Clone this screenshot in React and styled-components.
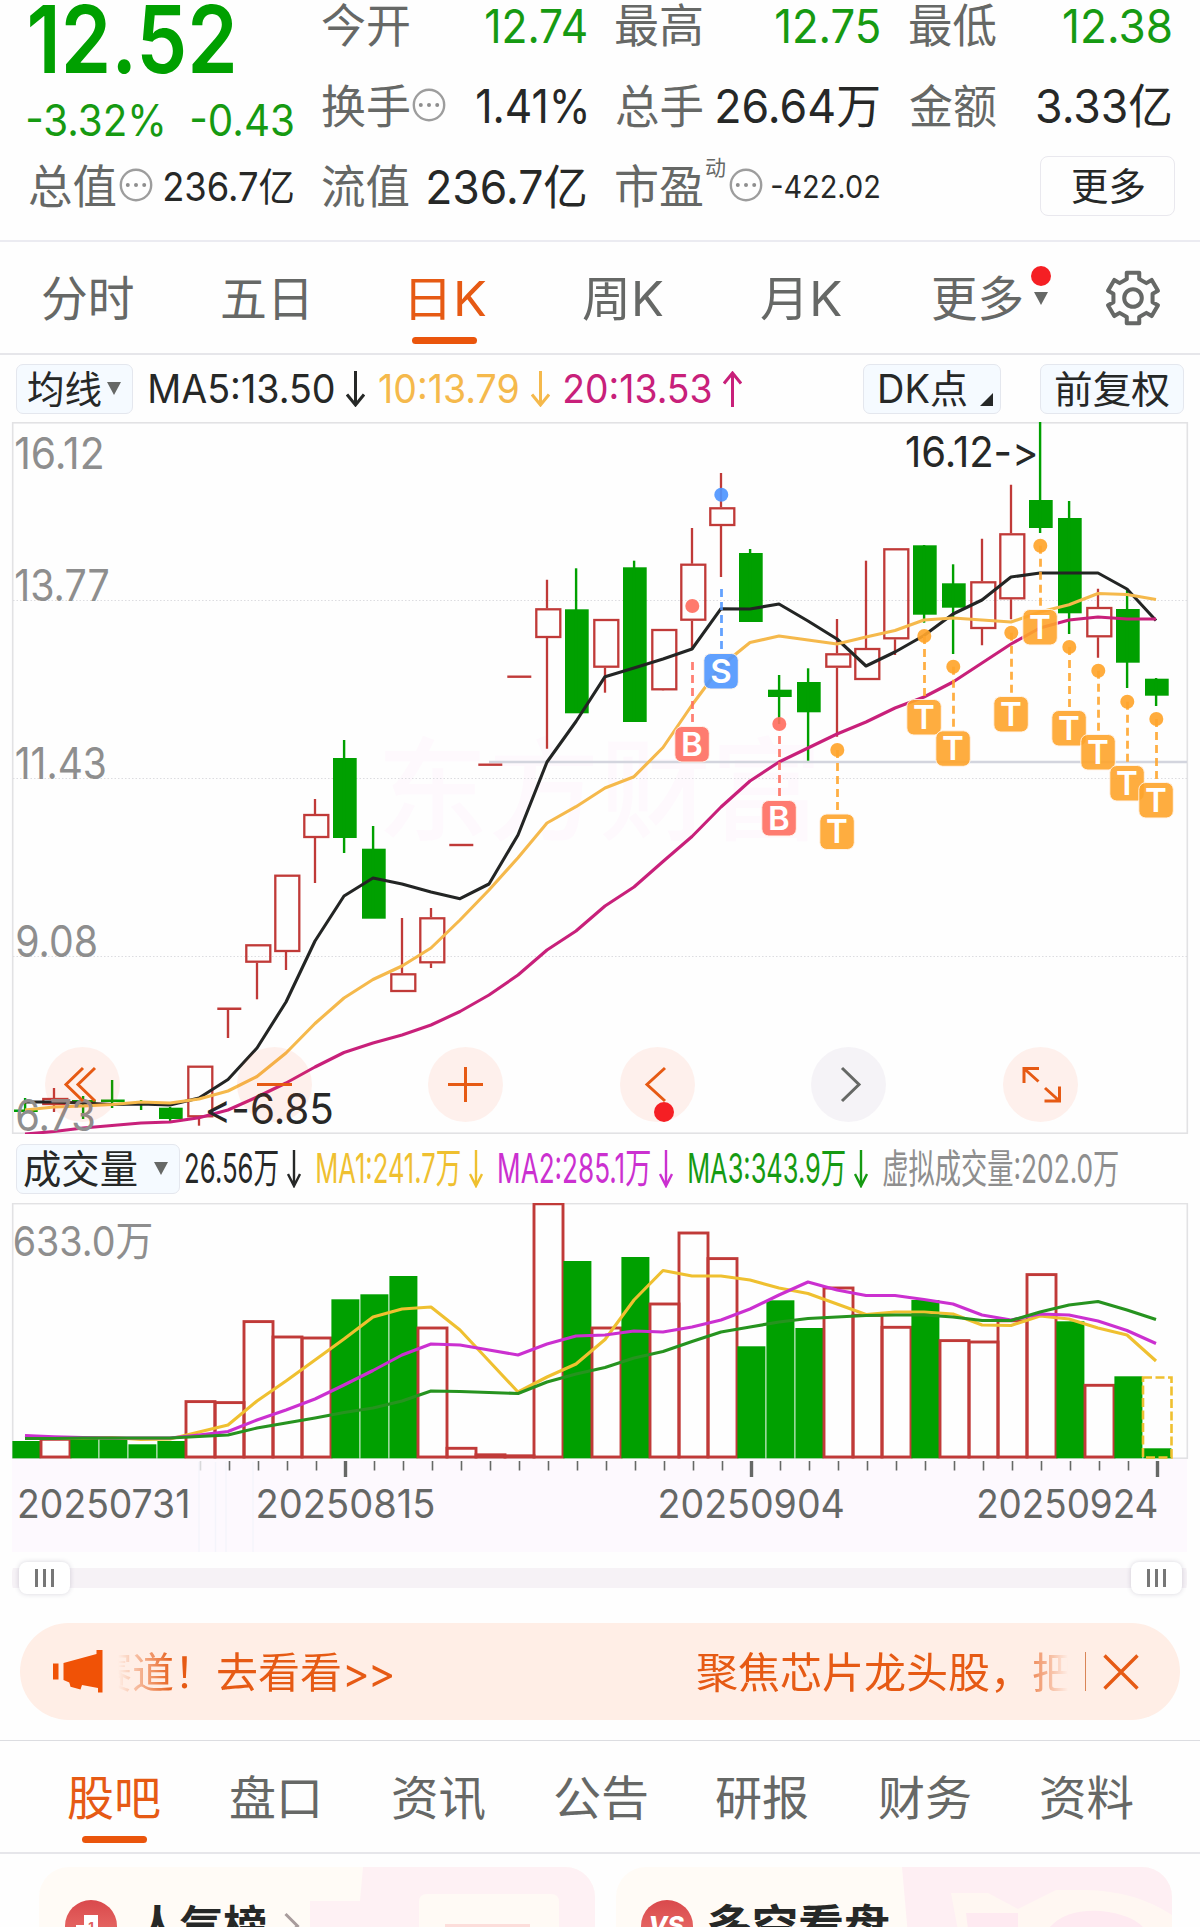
import React, { Fragment } from "react";
import styled, { createGlobalStyle, css } from "styled-components";

const FONT = 'Inter, "Noto Sans CJK SC", sans-serif';

const ORANGE = "#e65a14";
const GREEN = "#00a000";
const TEXT_GREEN = "#169a12";
const RED = "#c03a38";
const DARK = "#262827";
const GREY = "#666866";
const LIGHT_GREY = "#8e8e8e";
const AMBER = "#f5b94c";
const MAGENTA = "#c8207a";
const YELLOW = "#efc030";
const PURPLE = "#cb30d0";

const GlobalStyle = createGlobalStyle`
  * {
    box-sizing: border-box;
  }
  body {
    margin: 0;
    background: #fefefe;
    font-family: ${FONT};
  }
  button {
    font: inherit;
    padding: 0;
    border: none;
    background: none;
  }
`;

/* ---------- text fitted to a width ---------- */

const ctx = document.createElement("canvas").getContext("2d");

function inkBox(text, size, weight) {
  ctx.font = `${weight} ${size}px ${FONT}`;
  const m = ctx.measureText(text);
  return {
    left: -m.actualBoundingBoxLeft,
    width: m.actualBoundingBoxLeft + m.actualBoundingBoxRight,
  };
}

const FitBox = styled.span`
  display: block;
  flex: none;
  width: ${(p) => p.$w}px;
  height: ${(p) => p.$size}px;
  line-height: ${(p) => p.$size}px;
  margin-left: ${(p) => p.$ml || 0}px;
  font-size: ${(p) => p.$size}px;
  font-weight: ${(p) => p.$weight};
  color: ${(p) => p.$color};
  white-space: nowrap;
`;

const FitInner = styled.span`
  display: inline-block;
  transform-origin: 0 50%;
`;

function Fit({ children, w, size, color = GREY, weight = 400, ml }) {
  const ink = inkBox(children, size, weight);
  const s = w / ink.width;
  return (
    <FitBox $w={w} $size={size} $color={color} $weight={weight} $ml={ml}>
      <FitInner
        style={{ transform: `translateX(${-ink.left * s}px) scaleX(${s})` }}
      >
        {children}
      </FitInner>
    </FitBox>
  );
}

function ChartText({ children, x, y, w, size, color, weight = 400 }) {
  const ink = inkBox(children, size, weight);
  const s = w / ink.width;
  return (
    <text
      transform={`translate(${x - ink.left * s} ${y}) scale(${s} 1)`}
      fontSize={size}
      fontWeight={weight}
      fill={color}
      style={{ fontFeatureSettings: '"calt" 0' }}
    >
      {children}
    </text>
  );
}

/* ---------- page ---------- */

const Page = styled.div`
  width: 1200px;
  height: 1927px;
  overflow: hidden;
  display: flex;
  flex-direction: column;
`;

/* ---------- quote ---------- */

const Quote = styled.section`
  height: 240px;
  flex: none;
  display: grid;
  grid-template-columns: 264px 264px 264px 263px;
  column-gap: 29px;
  padding-left: 29px;
`;

const QuoteColumn = styled.div`
  display: grid;
  grid-template-rows: ${(p) => (p.$lead ? "77px 86px 46px" : "50px 50px 50px")};
  row-gap: ${(p) => (p.$lead ? 0 : 30.5)}px;
`;

const QuoteCell = styled.div`
  display: flex;
  align-items: center;
  justify-content: space-between;
`;

const Label = styled.div`
  display: flex;
  align-items: center;
`;

const Info = styled.svg`
  display: block;
  width: 34px;
  height: 34px;
  margin: -2px 0 0 ${(p) => p.$ml}px;
`;

const Super = styled.div`
  align-self: flex-start;
  margin: -6px 0 0 4px;
`;

const MoreButton = styled.button`
  width: 135px;
  height: 60px;
  margin-left: auto;
  margin-right: -4px;
  display: flex;
  flex: none;
  align-items: center;
  justify-content: center;
  border: 1.5px solid #e9e8ee;
  border-radius: 8px;
`;

function InfoIcon({ ml = 3 }) {
  return (
    <Info $ml={ml} viewBox="0 0 34 34">
      <circle cx="17" cy="17" r="15.2" fill="none" stroke="#9d9d9d" strokeWidth="2.4" />
      <circle cx="8.8" cy="17" r="2" fill="#8e8e8e" />
      <circle cx="17" cy="17" r="2" fill="#8e8e8e" />
      <circle cx="25.2" cy="17" r="2" fill="#8e8e8e" />
    </Info>
  );
}

function QuotePanel() {
  return (
    <Quote>
      <QuoteColumn $lead>
        <QuoteCell>
          <Fit w={203} size={94} weight={600} color={GREEN} ml={1}>12.52</Fit>
        </QuoteCell>
        <QuoteCell>
          <Fit w={135} size={44} color={TEXT_GREEN} ml={-1}>-3.32%</Fit>
          <Fit w={101} size={44} color={TEXT_GREEN}>-0.43</Fit>
        </QuoteCell>
        <QuoteCell>
          <Label>
            <Fit w={87} size={46}>总值</Fit>
            <InfoIcon />
          </Label>
          <Fit w={129} size={39} color={DARK}>236.7亿</Fit>
        </QuoteCell>
      </QuoteColumn>
      <QuoteColumn>
        <QuoteCell>
          <Fit w={87} size={46}>今开</Fit>
          <Fit w={100} size={47} color={TEXT_GREEN}>12.74</Fit>
        </QuoteCell>
        <QuoteCell>
          <Label>
            <Fit w={87} size={46}>换手</Fit>
            <InfoIcon />
          </Label>
          <Fit w={109} size={47} color={DARK}>1.41%</Fit>
        </QuoteCell>
        <QuoteCell>
          <Fit w={87} size={46}>流值</Fit>
          <Fit w={158} size={47} color={DARK}>236.7亿</Fit>
        </QuoteCell>
      </QuoteColumn>
      <QuoteColumn>
        <QuoteCell>
          <Fit w={86} size={46} ml={1}>最高</Fit>
          <Fit w={103} size={47} color={TEXT_GREEN}>12.75</Fit>
        </QuoteCell>
        <QuoteCell>
          <Fit w={86} size={46} ml={1}>总手</Fit>
          <Fit w={162} size={47} color={DARK}>26.64万</Fit>
        </QuoteCell>
        <QuoteCell>
          <Label>
            <Fit w={86} size={46} ml={1}>市盈</Fit>
            <Super>
              <Fit w={19} size={21}>动</Fit>
            </Super>
            <InfoIcon ml={4} />
          </Label>
          <Fit w={107} size={31} color={DARK}>-422.02</Fit>
        </QuoteCell>
      </QuoteColumn>
      <QuoteColumn>
        <QuoteCell>
          <Fit w={86} size={46} ml={2}>最低</Fit>
          <Fit w={107} size={47} color={TEXT_GREEN}>12.38</Fit>
        </QuoteCell>
        <QuoteCell>
          <Fit w={86} size={46} ml={2}>金额</Fit>
          <Fit w={134} size={47} color={DARK}>3.33亿</Fit>
        </QuoteCell>
        <QuoteCell>
          <MoreButton>
            <Fit w={72} size={38} color={DARK}>更多</Fit>
          </MoreButton>
        </QuoteCell>
      </QuoteColumn>
    </Quote>
  );
}

/* ---------- tabs ---------- */

const TabBar = styled.nav`
  height: ${(p) => p.$h}px;
  flex: none;
  display: flex;
  align-items: center;
  padding-top: 2px;
  border-top: ${(p) => p.$top || 2}px solid ${(p) => p.$line || "#ebebf1"};
  border-bottom: 2px solid #e6e6ea;
`;

const Tab = styled.button`
  position: relative;
  display: flex;
  align-items: center;
  margin-left: ${(p) => p.$ml}px;
  ${(p) =>
    p.$active &&
    css`
      &::after {
        content: "";
        position: absolute;
        left: 50%;
        bottom: ${p.$drop}px;
        width: 65px;
        height: 7px;
        margin-left: ${p.$shift || -32.5}px;
        border-radius: 4px;
        background: #ea550c;
      }
    `}
`;

const Caret = styled.span`
  width: 0;
  height: 0;
  margin: ${(p) => p.$m || "0"};
  border: solid transparent;
  border-width: 13px 7.7px 0;
  border-top-color: ${GREY};
`;

const TabDot = styled.span`
  position: absolute;
  right: -3px;
  top: -9px;
  width: 20px;
  height: 20px;
  border-radius: 50%;
  background: #f51f24;
`;

const Gear = styled.svg`
  width: 60px;
  height: 60px;
  margin: -1px 0 0 55px;
`;

const rad = (deg) => (deg * Math.PI) / 180;

const gearPoints = [0, 60, 120, 180, 240, 300]
  .flatMap((a) => [
    [a - 18, 20],
    [a - 14, 26],
    [a + 14, 26],
    [a + 18, 20],
  ])
  .map(([a, r]) => `${30 + r * Math.sin(rad(a))},${30 - r * Math.cos(rad(a))}`)
  .join(" ");

const PERIODS = [
  { label: "分时", w: 90.5, ml: 43 },
  { label: "五日", w: 84, ml: 88 },
  { label: "日K", w: 74.5, ml: 105 },
  { label: "周K", w: 79.5, ml: 98 },
  { label: "月K", w: 80, ml: 98 },
];

function PeriodTabs() {
  return (
    <TabBar $h={115}>
      {PERIODS.map((t) => {
        const active = t.label === "日K";
        return (
          <Tab key={t.label} $ml={t.ml} $active={active} $drop={-21} $shift={-36}>
            <Fit w={t.w} size={48} color={active ? ORANGE : GREY}>
              {t.label}
            </Fit>
          </Tab>
        );
      })}
      <Tab $ml={92.5}>
        <Fit w={89} size={48}>更多</Fit>
        <Caret $m="0 0 0 12px" />
        <TabDot />
      </Tab>
      <Gear viewBox="0 0 60 60" fill="none" stroke={GREY} strokeWidth="4">
        <polygon points={gearPoints} strokeLinejoin="round" />
        <circle cx="30" cy="30" r="8.8" />
      </Gear>
    </TabBar>
  );
}

/* ---------- indicator rows ---------- */

const IndicatorRow = styled.div`
  height: ${(p) => p.$h}px;
  flex: none;
  display: flex;
  align-items: center;
  padding-left: 16px;
`;

const Pill = styled.button`
  position: relative;
  display: flex;
  flex: none;
  align-items: center;
  width: ${(p) => p.$w}px;
  height: 50px;
  margin-left: ${(p) => p.$ml || 0}px;
  padding-left: ${(p) => p.$pad}px;
  background: #f5faff;
  border: 1.5px solid #e4e7ee;
  border-radius: 7px;
`;

const Corner = styled.span`
  width: 0;
  height: 0;
  margin: 22px 0 0 13px;
  border: solid transparent;
  border-width: 0 0 13px 13px;
  border-bottom-color: ${DARK};
`;

const ArrowSvg = styled.svg`
  flex: none;
  width: ${(p) => p.$w}px;
  height: ${(p) => p.$h}px;
  margin-left: ${(p) => p.$ml}px;
`;

function Arrow({ up, color, w = 19, h = 36, ml }) {
  const reach = w < 16 ? 12 : w / 2 + 1;
  const d = up
    ? `M${w / 2} ${h}V2M1 ${2 + reach}L${w / 2} 2L${w - 1} ${2 + reach}`
    : `M${w / 2} 0V${h - 2}M1 ${h - 2 - reach}L${w / 2} ${h - 2}L${w - 1} ${h - 2 - reach}`;
  return (
    <ArrowSvg $w={w} $h={h} $ml={ml} viewBox={`0 0 ${w} ${h}`}>
      <path d={d} fill="none" stroke={color} strokeWidth={w < 16 ? 2.4 : 3} />
    </ArrowSvg>
  );
}

function PriceIndicators() {
  return (
    <IndicatorRow $h={67}>
      <Pill $w={117} $pad={11}>
        <Fit w={73} size={38} color={DARK}>均线</Fit>
        <Caret $m="0 0 0 6px" />
      </Pill>
      <Fit w={183.5} size={40} color={DARK} ml={16.5}>MA5:13.50</Fit>
      <Arrow color={DARK} ml={13} />
      <Fit w={139} size={40} color={AMBER} ml={14}>10:13.79</Fit>
      <Arrow color={AMBER} ml={13} />
      <Fit w={146} size={40} color={MAGENTA} ml={15}>20:13.53</Fit>
      <Arrow up color={MAGENTA} ml={12} />
      <Pill $w={138} $pad={16} $ml={121}>
        <Fit w={87} size={39} color={DARK}>DK点</Fit>
        <Corner />
      </Pill>
      <Pill $w={144} $pad={14.5} $ml={39}>
        <Fit w={113} size={38} color={DARK}>前复权</Fit>
      </Pill>
    </IndicatorRow>
  );
}

function VolumeIndicators() {
  return (
    <IndicatorRow $h={69}>
      <Pill $w={164} $pad={7}>
        <Fit w={113} size={39} color={DARK}>成交量</Fit>
        <Caret $m="0 0 0 17px" />
      </Pill>
      <Fit w={92} size={41} color={DARK} ml={5.5}>26.56万</Fit>
      <Arrow color={DARK} w={14} h={38} ml={9} />
      <Fit w={143} size={41} color={YELLOW} ml={16}>MA1:241.7万</Fit>
      <Arrow color={YELLOW} w={14} h={38} ml={9} />
      <Fit w={151} size={41} color={PURPLE} ml={16}>MA2:285.1万</Fit>
      <Arrow color={PURPLE} w={14} h={38} ml={9} />
      <Fit w={156} size={41} color={TEXT_GREEN} ml={16}>MA3:343.9万</Fit>
      <Arrow color={TEXT_GREEN} w={14} h={38} ml={9} />
      <Fit w={235} size={40} color={LIGHT_GREY} ml={15}>虚拟成交量:202.0万</Fit>
    </IndicatorRow>
  );
}

/* ---------- candle chart ---------- */

const STEP = 29;
const cx = (i) => 25.3 + STEP * i;

// [up, top, bottom, high, low]
const CANDLES = [
  [0, 1109.5, 1112, 1098, 1112],
  [1, 1098, 1105, 1088, 1112],
  [0, 1100, 1103, 1096, 1119],
  [0, 1099.5, 1102, 1080, 1108],
  [0, 1102, 1104, 1100, 1110],
  [0, 1107.7, 1119, 1107, 1121],
  [1, 1065.7, 1117.3, 1065.7, 1125.7],
  [1, 1008.7, 1008.7, 1008, 1038],
  [1, 944.3, 962.7, 944.3, 999.3],
  [1, 874.7, 952, 874.7, 970],
  [1, 814, 838, 799, 883],
  [0, 758, 838, 740, 853],
  [0, 848.7, 918.7, 826, 918],
  [1, 973.3, 992, 918, 992],
  [1, 917.3, 963.3, 908, 968],
  [1, 845, 845, 845, 845],
  [1, 764.7, 764.7, 764.7, 764.7],
  [1, 676.7, 676.7, 676.7, 676.7],
  [1, 608.3, 638, 579.7, 748.7],
  [0, 609.3, 713.3, 568.3, 713],
  [1, 619, 667.7, 619, 692.7],
  [0, 567.3, 722, 560.7, 722],
  [1, 629, 690.3, 629, 690],
  [1, 563.7, 620.7, 528, 650],
  [1, 507.3, 526, 473, 577],
  [0, 553, 622, 549, 622],
  [0, 689.7, 697, 675, 724],
  [0, 682, 712.3, 668.3, 760.7],
  [1, 653.3, 667.7, 619, 736.7],
  [1, 648, 680, 560.7, 680],
  [1, 548.3, 639.3, 548.3, 655],
  [0, 545.3, 614.7, 545, 622.7],
  [0, 583.3, 607.7, 564.3, 654],
  [1, 581.3, 629, 538.7, 645.3],
  [1, 533.3, 599.3, 484.7, 619.3],
  [0, 500, 528, 422, 533],
  [0, 518, 613.3, 501, 634],
  [1, 607, 637.3, 588.7, 657.7],
  [0, 609, 662.7, 589, 688],
  [0, 678.7, 695.7, 678, 706],
];

const MA5 = [
  1102, 1102, 1103, 1104.5, 1104, 1105, 1098, 1079.5, 1048, 1002, 941, 896,
  878, 884, 892, 898.7, 884, 835, 762, 721.5, 676.7, 668, 659, 649, 608.7, 609,
  604, 621, 639, 666, 652, 635.5, 614, 600, 577, 573, 573, 573, 589, 620.5,
];

const MA10 = [
  1110, 1107, 1106, 1104.5, 1102, 1103, 1099, 1091, 1076.5, 1053, 1023.5, 998,
  979.5, 966, 948, 920, 890, 857.7, 823, 806.7, 788, 776.7, 747.5, 705, 666,
  642.5, 636, 640, 644, 637, 630.5, 620, 618, 620, 622, 612, 604.7, 593.5,
  594.5, 599.5,
];

const MA20 = [
  1134, 1131.5, 1128, 1125.5, 1123, 1122, 1117.7, 1110, 1097, 1083, 1067,
  1052.5, 1043, 1035, 1025, 1011.5, 995, 975, 950, 931, 906, 887, 861.5, 836.5,
  807, 781, 762, 748, 734, 722, 708, 697, 682, 663, 644, 628, 620, 617, 619,
  619,
];

const MARK_COLORS = { B: "#ff6f61", S: "#4f96ff", T: "#ffa52c" };

// index of the candle, letter, y of the dot, start of the dashes, top of the badge
const MARKS = [
  [23, "B", 606, 662, 726],
  [24, "S", 494.7, 589, 653],
  [26, "B", 724, 736, 800],
  [28, "T", 750, 750, 813.5],
  [31, "T", 636, 636, 699],
  [32, "T", 666.7, 666.7, 730.3],
  [34, "T", 632.7, 632.7, 696],
  [35, "T", 545.7, 545.7, 609],
  [36, "T", 647, 647, 710],
  [37, "T", 670.7, 670.7, 734],
  [38, "T", 701.7, 701.7, 765],
  [39, "T", 719, 719, 782],
];

const points = (ys) => ys.map((y, i) => `${cx(i) - 0.3},${y}`).join(" ");

function MaLine({ data, color }) {
  return (
    <polyline
      points={points(data)}
      fill="none"
      stroke={color}
      strokeWidth="3.1"
      strokeLinejoin="round"
    />
  );
}

function Candle({ i, data }) {
  const [up, top, bottom, high, low] = data;
  const x = cx(i);
  if (up && top === bottom) {
    return (
      <path
        d={`M${x - 11} ${top}h24M${x - 0.3} ${top}V${low}`}
        stroke={RED}
        strokeWidth="2.4"
      />
    );
  }
  if (up) {
    return (
      <g stroke={RED} strokeWidth="2.3" fill="none">
        <path d={`M${x - 0.3} ${high}V${top}M${x - 0.3} ${bottom}V${low}`} />
        <rect x={x - 11} y={top + 1} width="24" height={bottom - top - 2} />
      </g>
    );
  }
  return (
    <g fill={GREEN}>
      <rect x={x - 11.3} y={top} width="23.7" height={bottom - top} />
      <rect x={x - 1.4} y={high} width="2.4" height={low - high} />
    </g>
  );
}

function Mark({ data }) {
  const [i, letter, dot, from, top] = data;
  const color = MARK_COLORS[letter];
  const x = cx(i);
  return (
    <g>
      <circle cx={x} cy={dot} r="7" fill={color} opacity="0.92" />
      <path
        d={`M${x + 0.2} ${from}V${top - 1}`}
        stroke={color}
        strokeWidth="2.8"
        strokeDasharray="8 5"
        opacity="0.88"
      />
      <rect
        x={x - 17.5}
        y={top + 0.5}
        width="34.5"
        height="35.5"
        rx="7"
        fill={color}
        stroke="#fff3e8"
        strokeWidth="1"
        opacity="0.9"
      />
      <text
        x={x - 0.4}
        y={top + 29.8}
        fill="#fff"
        fontSize="33"
        fontWeight="600"
        textAnchor="middle"
      >
        {letter}
      </text>
    </g>
  );
}

const ChartArea = styled.div`
  position: relative;
  height: 712px;
  flex: none;
`;

const ChartSvg = styled.svg`
  display: block;
  flex: none;
  width: 1200px;
  height: ${(p) => p.$h}px;
`;

const Controls = styled.div`
  position: absolute;
  left: 45px;
  bottom: 12.5px;
  display: flex;
  gap: 116.5px;
`;

const RoundButton = styled.button`
  position: relative;
  width: 75px;
  height: 75px;
  border-radius: 50%;
  color: ${(p) => (p.$muted ? GREY : ORANGE)};
  background: ${(p) =>
    p.$muted ? "rgba(90, 60, 120, 0.055)" : "rgba(255, 80, 30, 0.08)"};

  svg {
    display: block;
    fill: none;
    stroke: currentColor;
    stroke-width: 3;
  }
`;

const ButtonDot = styled.span`
  position: absolute;
  left: 34.5px;
  bottom: 0;
  width: 20px;
  height: 20px;
  border-radius: 50%;
  background: #f51f24;
`;

const CONTROLS = [
  { id: "first", d: "M38 21L21 37.5L38 54M50 21L33 37.5L50 54" },
  { id: "minus", d: "M20 37.5H55" },
  { id: "plus", d: "M20 37.5H55M37.5 20V55" },
  { id: "prev", d: "M45 21L27 37.5L45 54", dot: true },
  { id: "next", d: "M31 21L48 37.5L31 54", muted: true },
  {
    id: "full",
    d: "M36 21.5H21V36M21 21.5L35.5 34.5M41.5 54H56.5V39.5M56.5 54L42 41",
  },
];

function PriceChart() {
  return (
    <ChartArea>
      <ChartSvg $h={712} viewBox="0 422 1200 712">
        <rect x="12.7" y="422.8" width="1174.6" height="710.4" fill="none" stroke="#e2e2e4" strokeWidth="1.6" />
        <ChartText x={384} y={832} w={430} size={112} weight={500} color="#fef9fd">
          东方财富
        </ChartText>
        {[600.5, 778.5, 956.5].map((y) => (
          <path key={y} d={`M13 ${y}H1187`} stroke="#dcdce0" strokeWidth="1" strokeDasharray="1.5 2" />
        ))}
        <path d="M489 762H1187" stroke="#d3d5de" strokeWidth="2.6" />
        {CANDLES.map((c, i) => (
          <Candle key={i} i={i} data={c} />
        ))}
        <MaLine data={MA5} color="#232524" />
        <MaLine data={MA10} color={AMBER} />
        <MaLine data={MA20} color={MAGENTA} />
        {MARKS.map((m) => (
          <Mark key={m[0]} data={m} />
        ))}
        <ChartText x={16} y={469} w={86} size={44} color={LIGHT_GREY}>16.12</ChartText>
        <ChartText x={16} y={601} w={92} size={44} color={LIGHT_GREY}>13.77</ChartText>
        <ChartText x={16.5} y={779} w={88.5} size={44} color={LIGHT_GREY}>11.43</ChartText>
        <ChartText x={17} y={957} w={79} size={44} color={LIGHT_GREY}>9.08</ChartText>
        <ChartText x={17} y={1131} w={77} size={44} color={LIGHT_GREY}>6.73</ChartText>
        <ChartText x={906} y={466.5} w={122} size={42} color={DARK}>{"16.12->"}</ChartText>
        <ChartText x={207.5} y={1124} w={125} size={42} color={DARK}>{"<-6.85"}</ChartText>
      </ChartSvg>
      <Controls>
        {CONTROLS.map((c) => (
          <RoundButton key={c.id} $muted={c.muted}>
            <svg width="75" height="75" viewBox="0 0 75 75">
              <path d={c.d} />
            </svg>
            {c.dot && <ButtonDot />}
          </RoundButton>
        ))}
      </Controls>
    </ChartArea>
  );
}

/* ---------- volume chart ---------- */

// [up, top]
const VOLUMES = [
  [0, 1441], [1, 1438], [0, 1439], [0, 1439.3], [0, 1444.3], [0, 1441],
  [1, 1400.3], [1, 1401.3], [1, 1320.3], [1, 1335.7], [1, 1336.7],
  [0, 1299.3], [0, 1294.3], [0, 1276], [1, 1326.7], [1, 1447], [1, 1453.5],
  [1, 1454.5], [1, 1202.5], [0, 1261], [1, 1326.7], [0, 1257], [1, 1302.7],
  [1, 1231.7], [1, 1257.3], [0, 1346.3], [0, 1300.3], [0, 1328],
  [1, 1286.7], [1, 1314], [1, 1326], [0, 1300], [1, 1339.3], [1, 1340.7],
  [1, 1319.5], [1, 1273.3], [0, 1321.3], [1, 1384], [0, 1376.3], [0, 1448.3],
];

const VMA1 = [
  1436, 1438, 1438, 1437.5, 1439.5, 1439, 1432, 1425, 1401, 1381, 1360, 1339,
  1317, 1309, 1307, 1330, 1361, 1392, 1377, 1364, 1339.5, 1300, 1270.5, 1276,
  1276, 1280, 1288, 1293.5, 1304, 1314.5, 1312, 1312, 1314, 1325, 1325.5, 1316,
  1319, 1328, 1335, 1361,
];

const VMA2 = [
  1435.5, 1436.7, 1437.5, 1438, 1438, 1438, 1435, 1431.5, 1420, 1410, 1399,
  1385, 1370.5, 1355, 1344, 1345, 1350, 1355, 1344, 1336, 1335, 1331, 1332,
  1327, 1320, 1309, 1295, 1282, 1290, 1295.5, 1295.5, 1299.5, 1304, 1315, 1320,
  1314, 1315, 1321, 1330.5, 1343.5,
];

const VMA3 = [
  1438.5, 1438.5, 1438, 1438, 1438, 1438, 1436.5, 1435, 1428, 1423, 1418,
  1412.5, 1408, 1401, 1391, 1391.5, 1392.5, 1393.5, 1382, 1374, 1367.5, 1358,
  1351.5, 1341.5, 1332, 1327, 1322, 1318.5, 1317, 1315.5, 1315, 1315, 1317,
  1320.5, 1320.5, 1312, 1305, 1301.5, 1310, 1319.5,
];

const FLOOR = 1458.3;
const MAJOR_TICKS = [11, 25, 39];

function VolumeBar({ i, up, top }) {
  const x = 12 + STEP * i;
  if (!up) {
    return <rect x={x + 0.4} y={top} width="28" height={FLOOR - top} fill={GREEN} />;
  }
  return (
    <rect
      x={x}
      y={top + 1.3}
      width="29"
      height={Math.max(FLOOR - top - 2.6, 1)}
      fill="none"
      stroke={RED}
      strokeWidth="2.9"
    />
  );
}

function VolumeChart() {
  return (
    <ChartSvg $h={351} viewBox="0 1203 1200 351">
      <rect x="12" y="1458" width="1175" height="94" fill="#fdf9fe" />
      {[199, 215.5, 226, 253].map((x) => (
        <path key={x} d={`M${x} 1462V1552`} stroke="#f4f4fb" strokeWidth="1.5" />
      ))}
      <rect x="12.7" y="1203.6" width="1174.6" height="254.6" fill="none" stroke="#e2e2e4" strokeWidth="1.6" />
      {VOLUMES.map(([up, top], i) => (
        <VolumeBar key={i} i={i} up={up} top={top} />
      ))}
      <rect x="1143" y="1377.5" width="28.5" height="80" fill="none" stroke={YELLOW} strokeWidth="2.6" strokeDasharray="9 3.5" />
      <MaLine data={VMA1} color={YELLOW} />
      <MaLine data={VMA2} color={PURPLE} />
      <MaLine data={VMA3} color="#26931f" />
      <ChartText x={14.5} y={1256} w={137} size={41} color={LIGHT_GREY}>633.0万</ChartText>
      {Array.from({ length: 34 }, (_, k) => k + 6).map((i) => {
        const major = MAJOR_TICKS.includes(i);
        return (
          <path
            key={i}
            d={`M${26.5 + STEP * i} 1461v${major ? 16 : 9.5}`}
            stroke={i === 6 ? "#d8d8da" : GREY}
            strokeWidth={major ? 3.4 : 1.6}
          />
        );
      })}
      <ChartText x={19} y={1518} w={168.5} size={39.5} color={GREY}>20250731</ChartText>
      <ChartText x={257.5} y={1518} w={176} size={39.5} color={GREY}>20250815</ChartText>
      <ChartText x={659.5} y={1518} w={184} size={39.5} color={GREY}>20250904</ChartText>
      <ChartText x={978} y={1518} w={179} size={39.5} color={GREY}>20250924</ChartText>
    </ChartSvg>
  );
}

/* ---------- range slider ---------- */

const Range = styled.div`
  height: 69px;
  flex: none;
  padding: 7.5px 13px 0 12px;
`;

const Track = styled.div`
  height: 32px;
  display: flex;
  justify-content: space-between;
  padding: 0 5px 0 7px;
  background: linear-gradient(#f6f2f6, #f6f2f6) 0 6px / 100% 20px no-repeat;
  border-radius: 10px;
`;

const Handle = styled.div`
  width: 51px;
  height: 32px;
  display: flex;
  align-items: center;
  justify-content: center;
  gap: 5.5px;
  border-radius: 8px;
  background: #fff;
  box-shadow: 0 0 5px rgba(60, 50, 90, 0.2);

  i {
    width: 2.5px;
    height: 18px;
    background: #777;
  }
`;

function RangeSlider() {
  const handle = (
    <Handle>
      <i />
      <i />
      <i />
    </Handle>
  );
  return (
    <Range>
      <Track>
        {handle}
        {handle}
      </Track>
    </Range>
  );
}

/* ---------- notice ---------- */

const Notice = styled.div`
  height: 97px;
  flex: none;
  display: flex;
  align-items: center;
  margin: 0 20.5px 0 20px;
  padding-left: 33px;
  border-radius: 49px;
  background: #ffeee6;
`;

const Horn = styled.svg`
  flex: none;
  width: 50px;
  height: 43px;
`;

const Marquee = styled.div`
  width: 950px;
  height: 60px;
  flex: none;
  margin-left: 15px;
  display: flex;
  overflow: hidden;
  font-size: 42px;
  line-height: 62px;
  white-space: nowrap;
  color: ${ORANGE};
  mask-image: linear-gradient(
    to right,
    transparent 0,
    #000 56px,
    #000 896px,
    transparent 100%
  );

  span {
    flex: none;
  }
  > span:first-child {
    width: 606px;
    margin-left: -28px;
  }
`;

const Chevrons = styled.span`
  letter-spacing: -2px;
`;

const Divider = styled.span`
  width: 1.5px;
  height: 39px;
  flex: none;
  margin-left: 16.5px;
  background: #d98557;
`;

const Close = styled.svg`
  width: 36px;
  height: 36px;
  margin-left: 17px;
`;

function NoticeBar() {
  return (
    <Notice>
      <Horn viewBox="0 0 50 43" fill="#f05206">
        <path d="M0 13.5H5.5V29.5H0Z" />
        <path d="M10.5 13L43.5 4V0H49.5V42.5H45V38L29 35L27.5 39.5L17.5 36.8L16.3 32.5L10.5 30Z" />
      </Horn>
      <Marquee>
        <span>
          赛道！去看看<Chevrons>&gt;&gt;</Chevrons>
        </span>
        <span>聚焦芯片龙头股，把</span>
      </Marquee>
      <Divider />
      <Close viewBox="0 0 36 36" fill="none" stroke={ORANGE} strokeWidth="3.4">
        <path d="M1.5 1.5L34.5 34.5M34.5 1.5L1.5 34.5" />
      </Close>
    </Notice>
  );
}

const Spacer = styled.div`
  height: ${(p) => p.$h}px;
  flex: none;
`;

/* ---------- bottom ---------- */

const SECTIONS = [
  { label: "股吧", w: 92, ml: 68, active: true },
  { label: "盘口", w: 87, ml: 71 },
  { label: "资讯", w: 92, ml: 75 },
  { label: "公告", w: 92, ml: 70 },
  { label: "研报", w: 92, ml: 69 },
  { label: "财务", w: 92, ml: 70.5 },
  { label: "资料", w: 92, ml: 70 },
];

const Cards = styled.div`
  display: flex;
  gap: 21px;
  padding: 13px 0 0 39px;
`;

const Card = styled.div`
  position: relative;
  width: 556px;
  height: 160px;
  flex: none;
  overflow: hidden;
  border-radius: 30px;
  background: #fffbf6;
`;

const CardArt = styled.svg`
  position: absolute;
  inset: 0;
  width: 556px;
  height: 160px;
`;

const CardHead = styled.div`
  position: relative;
  display: flex;
  align-items: center;
  height: 52px;
  margin: 33px 0 0 ${(p) => p.$ml}px;
`;

const Emblem = styled.svg`
  width: 52px;
  height: 52px;
  flex: none;
`;

const Chevron = styled.svg`
  width: 16px;
  height: 28px;
  margin-left: 18px;
`;

function EmblemDisc({ id }) {
  return (
    <Fragment>
      <linearGradient id={id} x1="0" y1="0" x2="0" y2="1">
        <stop offset="0" stopColor="#d9494c" />
        <stop offset="1" stopColor="#ee7a72" />
      </linearGradient>
      <circle cx="26" cy="26" r="26" fill={`url(#${id})`} />
    </Fragment>
  );
}

function BottomCards() {
  return (
    <Cards>
      <Card>
        <CardArt viewBox="0 0 556 160">
          <path d="M324 0H556V160H271V34H321Z" fill="#fef1f4" />
          <path d="M380 35Q380 27 388 27H512Q520 27 520 35V160H380Z" fill="#fffaf5" />
          <path d="M406 57H491V61H406Z" fill="#fddedb" />
        </CardArt>
        <CardHead $ml={26}>
          <Emblem viewBox="0 0 52 52">
            <EmblemDisc id="rank" />
            <path d="M11 25H19V15H33V29H41V42H11Z" fill="#fff" />
            <text x="26" y="32" fontSize="13" fontWeight="700" textAnchor="middle" fill="#e0605d">
              1
            </text>
          </Emblem>
          <Fit w={129} size={43} weight={600} color={DARK} ml={20}>人气榜</Fit>
          <Chevron viewBox="0 0 16 28" fill="none" stroke="#a89c9c" strokeWidth="3">
            <path d="M1.5 2L13.5 14L1.5 26" />
          </Chevron>
        </CardHead>
      </Card>
      <Card>
        <CardArt viewBox="0 0 556 160">
          <path d="M286 0H556V160H300Z" fill="#feeff3" />
          <path
            d="M335 26H372L402 42L440 23H470Q520 24 556 48V160H360Z"
            fill="#fff7f2"
          />
          <path d="M350 46H402V160H364ZM434 60Q450 42 485 44Q520 48 530 64V160H434Z" fill="#feeaf1" />
        </CardArt>
        <CardHead $ml={25}>
          <Emblem viewBox="0 0 52 52">
            <EmblemDisc id="versus" />
            <text x="25" y="34" fontSize="25" fontWeight="800" fontStyle="italic" textAnchor="middle" fill="#fff">
              VS
            </text>
          </Emblem>
          <Fit w={181} size={44} weight={600} color={DARK} ml={15}>多空看盘</Fit>
        </CardHead>
      </Card>
    </Cards>
  );
}

export default function App() {
  return (
    <Page>
      <GlobalStyle />
      <QuotePanel />
      <PeriodTabs />
      <PriceIndicators />
      <PriceChart />
      <VolumeIndicators />
      <VolumeChart />
      <RangeSlider />
      <NoticeBar />
      <Spacer $h={20} />
      <TabBar $h={114} $top={1.5} $line="#dcdde1">
        {SECTIONS.map((t) => (
          <Tab key={t.label} $ml={t.ml} $active={t.active} $drop={-22}>
            <Fit w={t.w} size={47} color={t.active ? ORANGE : GREY}>
              {t.label}
            </Fit>
          </Tab>
        ))}
      </TabBar>
      <BottomCards />
    </Page>
  );
}
